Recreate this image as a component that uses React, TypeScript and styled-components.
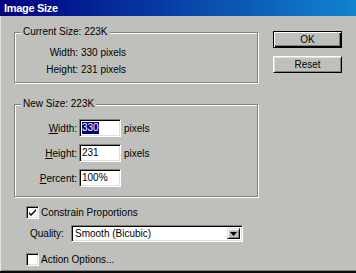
import React from "react";
import styled, { createGlobalStyle } from "styled-components";

const BG = "#bfc0bc";

const Global = createGlobalStyle`
  html, body { margin: 0; padding: 0; background: ${BG}; }
  body { font-family: "Liberation Sans", Arial, sans-serif; font-size: 10px; color: #000; }
  * { box-sizing: border-box; }
`;

const Window = styled.div`
  width: 356px;
  height: 273px;
  background: ${BG};
  display: flex;
  flex-direction: column;
  border-bottom: 2px solid #0c0c0c;
  overflow: hidden;
`;

const TitleBar = styled.div`
  height: 16px;
  flex: none;
  display: flex;
  align-items: center;
  padding-left: 4px;
  background: linear-gradient(90deg, #000080 0%, #1084d0 100%);
  color: #fff;
  font-weight: bold;
  font-size: 11px;
  letter-spacing: -0.3px;
`;

const Body = styled.div`
  flex: 1;
  display: flex;
  gap: 15px;
  padding: 10px 0 0 14px;
  box-shadow: inset 1px 0 #e4e4e4, inset 0 -1px #808080;
`;

const LeftCol = styled.div`
  width: 244px;
  display: flex;
  flex-direction: column;
`;

const RightCol = styled.div`
  width: 69px;
  display: flex;
  flex-direction: column;
  gap: 8px;
  padding-top: 5px;
`;

const Group = styled.fieldset<{ $pt: number; $pb: number; $mt?: number }>`
  margin: ${(p) => p.$mt ?? 0}px 0 0 0;
  padding: ${(p) => p.$pt}px 0 ${(p) => p.$pb}px 0;
  border: 1px solid #808080;
  box-shadow: inset 1px 1px #fff, 1px 1px #fff;
  min-width: 0;
`;

const Legend = styled.legend`
  margin-left: 6px;
  padding: 0 2px;
  line-height: 12px;
  font-size: 10px;
  background: ${BG};
`;

const InfoGrid = styled.div`
  display: grid;
  grid-template-columns: 63px auto;
  column-gap: 3px;
  grid-auto-rows: 17px;
  align-items: center;
`;

const FormGrid = styled.div`
  display: grid;
  grid-template-columns: 62px 42px auto;
  column-gap: 2px;
  row-gap: 7px;
  grid-auto-rows: 18px;
  align-items: center;
`;

const Label = styled.span`
  text-align: right;
  white-space: nowrap;
`;

const Key = styled.span`
  text-decoration: underline;
`;

const Unit = styled.span`
  margin-left: 1px;
`;

const Field = styled.div`
  width: 42px;
  height: 18px;
  background: #fff;
  border-top: 1px solid #808080;
  border-left: 1px solid #808080;
  border-right: 1px solid #fff;
  border-bottom: 1px solid #fff;
  box-shadow: inset 1px 1px #000, inset -1px -1px #dfdfdf;
  padding: 0 0 0 2px;
  display: flex;
  align-items: center;
  line-height: 12px;
`;

const Selected = styled.span`
  background: #000080;
  color: #fff;
`;

const CheckRow = styled.div<{ $mt: number }>`
  display: flex;
  align-items: center;
  gap: 2px;
  margin-top: ${(p) => p.$mt}px;
  padding-left: 12px;
  height: 13px;
`;

const Box = styled.span`
  width: 13px;
  height: 13px;
  flex: none;
  background: #fff;
  border-top: 1px solid #808080;
  border-left: 1px solid #808080;
  border-right: 1px solid #fff;
  border-bottom: 1px solid #fff;
  box-shadow: inset 1px 1px #000, inset -1px -1px #dfdfdf;
  display: flex;
  align-items: center;
  justify-content: center;
`;

const QualityRow = styled.div`
  display: flex;
  align-items: center;
  margin-top: 6px;
  padding-left: 16px;
  height: 17px;
`;

const QualityLabel = styled.span`
  width: 41px;
  flex: none;
`;

const Select = styled.div`
  width: 172px;
  height: 17px;
  background: #fff;
  border-top: 1px solid #808080;
  border-left: 1px solid #808080;
  border-right: 1px solid #fff;
  border-bottom: 1px solid #fff;
  box-shadow: inset 1px 1px #000, inset -1px -1px #dfdfdf;
  display: flex;
  align-items: center;
  padding: 2px 2px 2px 3px;
`;

const SelectText = styled.span`
  flex: 1;
`;

const DropButton = styled.span`
  width: 13px;
  height: 11px;
  background: ${BG};
  border-top: 1px solid #dfdfdf;
  border-left: 1px solid #dfdfdf;
  border-right: 1px solid #000;
  border-bottom: 1px solid #000;
  box-shadow: inset 1px 1px #fff, inset -1px -1px #808080;
  display: flex;
  align-items: center;
  justify-content: center;
`;

const Button = styled.div<{ $default?: boolean }>`
  width: 69px;
  height: 17px;
  display: flex;
  align-items: center;
  justify-content: center;
  background: ${BG};
  ${(p) =>
    p.$default
      ? `border: 1px solid #000;
         box-shadow: inset 1px 1px #fff, inset -1px -1px #000, inset -2px -2px #808080;`
      : `border-top: 1px solid #fff;
         border-left: 1px solid #fff;
         border-right: 1px solid #000;
         border-bottom: 1px solid #000;
         box-shadow: inset 1px 1px #dfdfdf, inset -1px -1px #808080;`}
`;

const Check = () => (
  <svg width="7" height="7" viewBox="0 0 7 7">
    <path d="M0 3 L2 5 L7 0 L7 2 L2 7 L0 5 Z" fill="#000" />
  </svg>
);

const Arrow = () => (
  <svg width="7" height="4" viewBox="0 0 7 4">
    <path d="M0 0 H7 L3.5 4 Z" fill="#000" />
  </svg>
);

export default function App() {
  return (
    <>
      <Global />
      <Window>
        <TitleBar>Image Size</TitleBar>
        <Body>
          <LeftCol>
            <Group $pt={6} $pb={4}>
              <Legend>Current Size: 223K</Legend>
              <InfoGrid>
                <Label>Width:</Label>
                <span>330 pixels</span>
                <Label>Height:</Label>
                <span>231 pixels</span>
              </InfoGrid>
            </Group>
            <Group $pt={9} $pb={9} $mt={15}>
              <Legend>New Size: 223K</Legend>
              <FormGrid>
                <Label>
                  <Key>W</Key>idth:
                </Label>
                <Field>
                  <Selected>330</Selected>
                </Field>
                <Unit>pixels</Unit>
                <Label>
                  <Key>H</Key>eight:
                </Label>
                <Field>231</Field>
                <Unit>pixels</Unit>
                <Label>
                  <Key>P</Key>ercent:
                </Label>
                <Field>100%</Field>
                <span />
              </FormGrid>
            </Group>
            <CheckRow $mt={9}>
              <Box>
                <Check />
              </Box>
              <span>Constrain Proportions</span>
            </CheckRow>
            <QualityRow>
              <QualityLabel>Quality:</QualityLabel>
              <Select>
                <SelectText>Smooth (Bicubic)</SelectText>
                <DropButton>
                  <Arrow />
                </DropButton>
              </Select>
            </QualityRow>
            <CheckRow $mt={11}>
              <Box />
              <span>Action Options...</span>
            </CheckRow>
          </LeftCol>
          <RightCol>
            <Button $default>OK</Button>
            <Button>Reset</Button>
          </RightCol>
        </Body>
      </Window>
    </>
  );
}
